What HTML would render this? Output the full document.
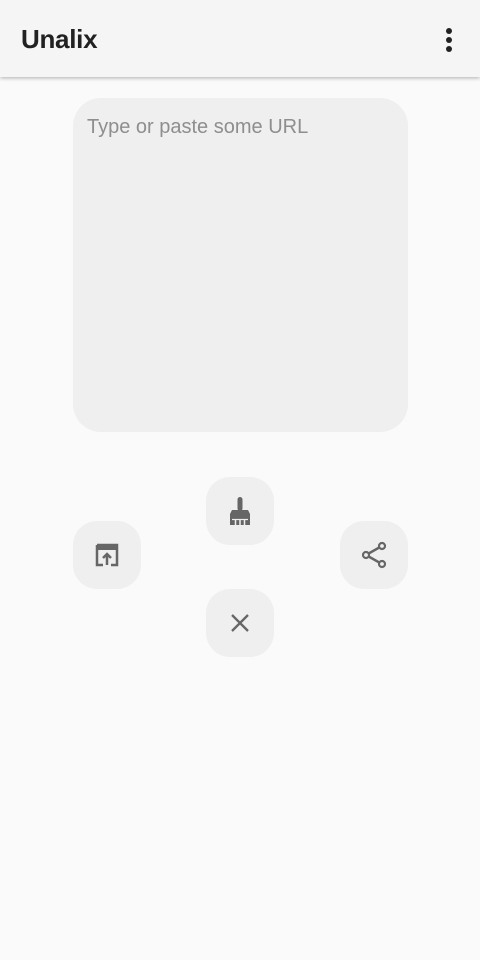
<!DOCTYPE html>
<html><head><meta charset="utf-8"><style>
html,body{margin:0;padding:0;width:480px;height:960px;background:#fafafa;overflow:hidden;font-family:"Liberation Sans",Roboto,sans-serif}
.bar{position:absolute;left:0;top:0;width:480px;height:77px;background:#f5f5f5;box-shadow:0 1px 4px rgba(0,0,0,.3)}
.title{position:absolute;left:21px;top:24px;font-size:26px;font-weight:600;color:#212121;letter-spacing:-0.3px}
.dots{position:absolute;left:446px;top:28px}
.dots i{display:block;width:6px;height:6px;border-radius:50%;background:#222;margin-bottom:3px}
.field{position:absolute;left:73px;top:98px;width:335px;height:334px;background:#efefef;border-radius:28px}
.ph{position:absolute;left:14px;top:18px;font-size:20px;color:#8e8e8e}
.btn{position:absolute;width:68px;height:68px;border-radius:24px;background:#efefef;display:flex;align-items:center;justify-content:center}
</style></head><body>
<div class="bar"><div class="title">Unalix</div><div class="dots"><i></i><i></i><i></i></div></div>
<div class="field"><div class="ph">Type or paste some URL</div></div>
<div class="btn" style="left:206px;top:477px"><svg width="28" height="32" viewBox="0 0 28 32"><rect x="11.5" y="2" width="5" height="14" rx="2.5" fill="#666"/><path d="M6 15h16l2 4v11H4V19z" fill="#666"/><path d="M9.5 25v5M14 25v5M18.5 25v5" stroke="#efefef" stroke-width="1.5"/><path d="M6 24.5h16" stroke="#efefef" stroke-width="1.2"/></svg></div>
<div class="btn" style="left:73px;top:521px"><svg width="28" height="28" viewBox="0 0 28 28"><path d="M4 4h20v20h-6M10 24H4V4" fill="none" stroke="#666" stroke-width="2.5"/><rect x="4" y="4" width="20" height="5" fill="#666"/><path d="M14 24V13M10 17l4-4 4 4" fill="none" stroke="#666" stroke-width="2.5"/></svg></div>
<div class="btn" style="left:340px;top:521px"><svg width="30" height="30" viewBox="0 0 30 30"><path d="M7 15L23 6M7 15l16 9" stroke="#666" stroke-width="2.5"/><circle cx="23" cy="6" r="3" fill="#efefef" stroke="#666" stroke-width="2.2"/><circle cx="23" cy="24" r="3" fill="#efefef" stroke="#666" stroke-width="2.2"/><circle cx="7" cy="15" r="3" fill="#efefef" stroke="#666" stroke-width="2.2"/></svg></div>
<div class="btn" style="left:206px;top:589px"><svg width="24" height="24" viewBox="0 0 24 24"><path d="M4 4l16 16M20 4L4 20" stroke="#666" stroke-width="2.3"/></svg></div>
</body></html>
